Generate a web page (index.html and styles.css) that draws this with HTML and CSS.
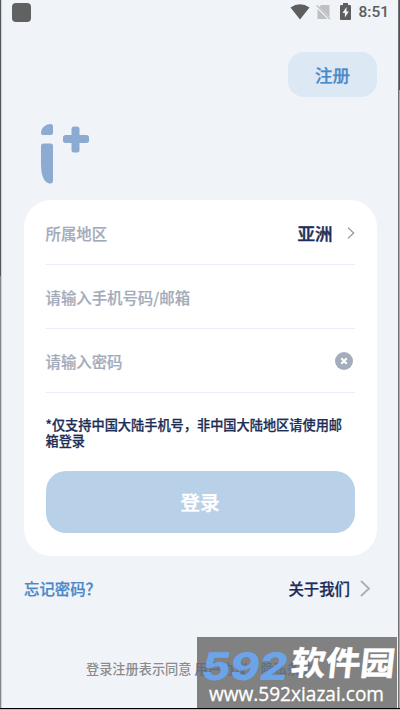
FILE: index.html
```html
<!DOCTYPE html>
<html lang="zh-CN">
<head>
<meta charset="utf-8">
<title>登录</title>
<link rel="stylesheet" href="styles.css">
</head>
<body>
<main class="screen">
  <header class="status">
    <span class="app-dot"></span>
    <svg class="wifi" width="20" height="16" viewBox="0 0 20 16"><path d="M.5 3.500Q10-3 19.500 3.500L10 15.500Z" fill="#5e5e5e"/></svg>
    <svg class="sim" width="15" height="16" viewBox="0 0 15 16"><path d="M5 1h8.500v12L3.500 3ZM1.500 5l10 10h-10Z" fill="#bfc0c2"/><path d="M.7 1.300 14 15" stroke="#bfc0c2" stroke-width="1.400"/></svg>
    <svg class="battery" width="11" height="17" viewBox="0 0 11 17"><path d="M3 0h5v2h2q1 0 1 1v13q0 1-1 1H1q-1 0-1-1V3q0-1 1-1h2Z" fill="#5e5e5e"/><path d="M6.500 4 2.500 10h2.400v4.500L8.800 8.500H6.500Z" fill="#f0f3f8"/></svg>
    <span class="time">8:51</span>
  </header>
  <div class="top"><button class="register">注册</button></div>
  <svg class="logo" width="50" height="62" viewBox="0 0 50 62" fill="#8cabd3">
    <path d="M1 10C1 4 7 1 10.500 1Q13 1 13 3.500v6Q13 12 10.500 12H3Q1 12 1 10Z"/>
    <path d="M3.500 20.500h7Q13 20.500 13 23V57.500q0 3-2.500 3C3 60.500 1 50 1 40V23Q1 20.500 3.500 20.500Z"/>
    <path d="M34 3.500h3q2.500 0 2.500 2.500V12h7Q49 12 49 14.500v3Q49 20 46.500 20h-7v7q0 2.500-2.500 2.500h-3q-2.500 0-2.500-2.500v-7h-6Q23 20 23 17.500v-3Q23 12 25.500 12h6V6Q31.500 3.500 34 3.500Z"/>
  </svg>
  <section class="card">
    <div class="row">
      <span>所属地区</span>
      <strong class="region">亚洲</strong>
      <svg width="8" height="12" viewBox="0 0 8 12" fill="none" stroke="#8b8d92" stroke-width="1.100"><path d="m1 .7 5.700 5.300L1 11.300"/></svg>
    </div>
    <div class="row"><span>请输入手机号码/邮箱</span></div>
    <div class="row">
      <span>请输入密码</span>
      <svg class="clear" width="18" height="18" viewBox="0 0 18 18"><circle cx="9" cy="9" r="9" fill="#a3adbb"/><path d="m6.300 6.300 5.400 5.400m0-5.400-5.400 5.400" stroke="#fff" stroke-width="2.100"/></svg>
    </div>
    <p class="tip">*仅支持中国大陆手机号，非中国大陆地区请使用邮箱登录</p>
    <button class="login">登录</button>
  </section>
  <nav class="links">
    <a class="forgot">忘记密码？</a>
    <a class="about">关于我们</a>
    <svg width="11" height="17" viewBox="0 0 11 17" fill="none" stroke="#a9adb8" stroke-width="1.800"><path d="m1 1 8 7.500L1 16"/></svg>
  </nav>
  <p class="legal">登录注册表示同意 <a>用户协议、隐私条款</a></p>
  <div class="mark-bg"></div>
  <svg class="watermark" width="200" height="71" viewBox="0 0 200 71">
    <g transform="translate(3 43) skewX(-9)"><text class="mark-num" textLength="86" lengthAdjust="spacingAndGlyphs">592</text></g>
    <g transform="translate(93 38) skewX(-6)"><text class="mark-name" textLength="104" lengthAdjust="spacingAndGlyphs">软件园</text></g>
    <text class="mark-url" x="12" y="64" textLength="175" lengthAdjust="spacingAndGlyphs">www.592xiazai.com</text>
  </svg>
</main>
</body>
</html>
```
FILE: styles.css
```css
* { box-sizing: border-box; }
body { margin: 0; background: #b8b9bb; font-family: "Noto Sans CJK SC", sans-serif; font-weight: 500; }
button { border: 0; padding: 0; font: inherit; }
.screen {
  position: relative;
  width: 400px;
  height: 709px;
  overflow: hidden;
  padding: 0 3px 0 2px;
  background:
    linear-gradient(#56575c 0 276px, #85868a 276px) 0 0 / 1px 100% no-repeat,
    linear-gradient(#d0d1d3, #d0d1d3) 1px 0 / 1px 100% no-repeat,
    linear-gradient(#505155 0 90px, #a9aaae 90px) 100% 0 / 1px 100% no-repeat,
    linear-gradient(#707175, #707175) 398px 0 / 1px 100% no-repeat,
    #f0f3f8;
  border-bottom: 1px solid #000;
}
.status { display: flex; height: 24px; padding: 0 8px 0 10px; align-items: center; }
.app-dot { width: 19px; height: 19px; border-radius: 4px; background: #606163; margin-right: auto; }
.wifi { margin-right: 6px; }
.sim { margin-right: 9px; }
.battery { margin: -2px 7px 0 0; }
.time { font: 500 15.5px/24px Roboto, sans-serif; color: #5e5e5e; }
.top { display: flex; justify-content: flex-end; padding: 28px 20px 0 0; }
.register { width: 89px; height: 45px; padding-bottom: 1px; border-radius: 16px; background: #dce8f4; color: #4a88c9; font-size: 17.5px; -webkit-text-stroke: .25px; }
.logo { display: block; margin: 26px 0 0 38px; }
.card { margin: 15px 20.5px 0 22px; height: 356px; padding: 0 22px 0 21.5px; border-radius: 27px; background: #fff; }
.row { display: flex; align-items: center; height: 64px; border-bottom: 1px solid #e9eef6; font-size: 15.4px; color: #a3abba; -webkit-text-stroke: .2px; }
.row:first-child { height: 65px; padding-top: 1px; }
.row span { margin-right: auto; }
.region { font-size: 17.5px; font-weight: 500; color: #1c2d56; margin-right: 14px; -webkit-text-stroke: .4px; }
.clear { margin-right: 2px; }
.tip { margin: 24px 0 0; font-size: 13.2px; line-height: 15.5px; color: #1c2d56; -webkit-text-stroke: .25px; }
.login { display: block; width: 100%; height: 62px; margin-top: 23px; padding-bottom: 2px; border-radius: 20px; background: #b9d0e9; color: #fff; font-size: 19.5px; -webkit-text-stroke: .4px; }
.links { display: flex; align-items: center; height: 24px; margin: 20px 26px 0 22px; font-size: 15.4px; -webkit-text-stroke: .25px; }
.forgot { margin-right: auto; color: #4a88c9; }
.about { color: #1c2d56; margin-right: 10px; }
.legal { position: relative; z-index: 1; margin: 57px 0 0 84px; font-size: 13.2px; line-height: 24px; color: #8a8b8c; white-space: nowrap; }
.legal a { color: #596f88; }
.mark-bg, .watermark { position: absolute; left: 197px; top: 637px; width: 200px; height: 71px; }
.mark-bg { background: #818181; }
.watermark { z-index: 2; }
.mark-num { font: 800 38px Inter, sans-serif; fill: #6aaaf8; fill-opacity: .88; }
.mark-name { font: 700 33px "Noto Sans CJK SC", sans-serif; fill: #fff; stroke: #fff; stroke-width: .5px; }
.mark-url { font: 400 20px "Open Sans", sans-serif; fill: #fff; stroke: #fff; stroke-width: .3px; }
```
